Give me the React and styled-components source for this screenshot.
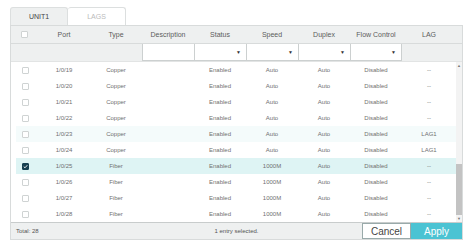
import React from "react";
import styled, { createGlobalStyle } from "styled-components";

const Global = createGlobalStyle`
  html, body { margin: 0; padding: 0; background: #fff; }
  body { font-family: "Liberation Sans", Arial, sans-serif; }
`;

const COLS = "27px 52px 52px 52px 52px 52px 52px 52px 54px";

const Wrap = styled.div`
  padding: 7px 0 0 10px;
  width: 453px;
`;

const Tabs = styled.div`
  display: flex;
  height: 18px;
`;

const Tab = styled.div`
  width: 58px;
  box-sizing: border-box;
  display: flex;
  align-items: center;
  justify-content: center;
  font-size: 7px;
  color: ${(p) => (p.$active ? "#444" : "#bbb")};
  background: ${(p) => (p.$active ? "#eef0f0" : "#fff")};
  border: 1px solid #dcdfdf;
  border-bottom: none;
  border-left: ${(p) => (p.$first ? "1px solid #dcdfdf" : "none")};
  border-radius: 3px 3px 0 0;
`;

const Panel = styled.div`
  border: 1px solid #d8dbdb;
  box-sizing: border-box;
  width: 453px;
  background: #fff;
`;

const Row = styled.div`
  display: grid;
  grid-template-columns: ${COLS} 8px;
  align-items: stretch;
`;

const HeadRow = styled(Row)`
  height: 17px;
  background: #eef0f0;
  border-bottom: 1px solid #d8dbdb;
`;

const HeadCell = styled.div`
  display: flex;
  align-items: center;
  justify-content: ${(p) => (p.$start ? "flex-start" : "center")};
  padding-left: ${(p) => (p.$start ? "10px" : "0")};
  font-size: 7px;
  color: #5c5c5c;
`;

const FilterRow = styled(Row)`
  height: 17px;
  background: #eef0f0;
  border-bottom: 1px solid #e2e4e4;
`;

const FilterCell = styled.div`
  display: flex;
  align-items: stretch;
`;

const Select = styled.div`
  flex: 1;
  background: #fff;
  border: 1px solid #ccd0d0;
  border-top: none;
  border-right: ${(p) => (p.$last ? "1px solid #ccd0d0" : "none")};
  display: flex;
  align-items: center;
  justify-content: flex-end;
  padding-right: 5px;
  font-size: 5px;
  color: #333;
`;

const Body = styled.div`
  display: flex;
  height: 160px;
`;

const Rows = styled.div`
  width: 445px;
`;

const DataRow = styled.div`
  display: grid;
  grid-template-columns: 22px 52px 52px 52px 52px 52px 52px 52px 54px;
  height: 16px;
  margin-left: 5px;
  background: ${(p) => (p.$sel ? "#def4f4" : p.$hover ? "#f4fbfb" : "#fff")};
`;

const Cell = styled.div`
  display: flex;
  align-items: center;
  justify-content: ${(p) => (p.$start ? "flex-start" : "center")};
  padding-left: ${(p) => (p.$start ? "6px" : "0")};
  font-size: 6px;
  color: #707070;
`;

const Check = styled.span`
  width: 7px;
  height: 7px;
  box-sizing: border-box;
  border: 1px solid ${(p) => (p.$on ? "#163f50" : "#cfd3d3")};
  background: ${(p) => (p.$on ? "#163f50" : "#fff")};
  border-radius: 1px;
  display: inline-flex;
  align-items: center;
  justify-content: center;
`;

const Scroll = styled.div`
  width: 8px;
  background: #f3f3f3;
  display: flex;
  flex-direction: column;
  align-items: center;
`;

const Arrow = styled.div`
  height: 7px;
  display: flex;
  align-items: center;
  justify-content: center;
  font-size: 4px;
  color: #777;
`;

const Gap = styled.div`
  height: ${(p) => p.$h}px;
`;

const Thumb = styled.div`
  width: 6px;
  height: 51px;
  background: #c3c3c3;
`;

const Footer = styled.div`
  display: grid;
  grid-template-columns: 1fr auto 1fr;
  height: 16px;
  background: #eef0f0;
  border-top: 1px solid #c8cccc;
  align-items: stretch;
`;

const Total = styled.div`
  display: flex;
  align-items: center;
  padding-left: 5px;
  font-size: 6px;
  color: #555;
`;

const Info = styled.div`
  display: flex;
  align-items: center;
  font-size: 6px;
  color: #555;
`;

const Buttons = styled.div`
  display: flex;
  justify-content: flex-end;
`;

const Btn = styled.div`
  width: ${(p) => p.$w}px;
  box-sizing: border-box;
  display: flex;
  align-items: center;
  justify-content: center;
  font-size: 10px;
  color: ${(p) => (p.$primary ? "#fff" : "#444")};
  background: ${(p) => (p.$primary ? "#4bc3d3" : "#fff")};
  border: 1px solid ${(p) => (p.$primary ? "#4bc3d3" : "#9aa")};
`;

const rows = [
  ["1/0/19", "Copper", "Auto", "--"],
  ["1/0/20", "Copper", "Auto", "--"],
  ["1/0/21", "Copper", "Auto", "--"],
  ["1/0/22", "Copper", "Auto", "--"],
  ["1/0/23", "Copper", "Auto", "LAG1"],
  ["1/0/24", "Copper", "Auto", "LAG1"],
  ["1/0/25", "Fiber", "1000M", "--"],
  ["1/0/26", "Fiber", "1000M", "--"],
  ["1/0/27", "Fiber", "1000M", "--"],
  ["1/0/28", "Fiber", "1000M", "--"],
];

const CheckMark = () => (
  <svg width="5" height="5" viewBox="0 0 10 10">
    <path d="M1.5 5.2 L4 7.6 L8.6 2.4" fill="none" stroke="#fff" strokeWidth="1.8" />
  </svg>
);

export default function App() {
  return (
    <Wrap>
      <Global />
      <Tabs>
        <Tab $active $first>UNIT1</Tab>
        <Tab>LAGS</Tab>
      </Tabs>
      <Panel>
        <HeadRow>
          <HeadCell $start><Check /></HeadCell>
          <HeadCell>Port</HeadCell>
          <HeadCell>Type</HeadCell>
          <HeadCell>Description</HeadCell>
          <HeadCell>Status</HeadCell>
          <HeadCell>Speed</HeadCell>
          <HeadCell>Duplex</HeadCell>
          <HeadCell>Flow Control</HeadCell>
          <HeadCell>LAG</HeadCell>
          <HeadCell />
        </HeadRow>
        <FilterRow>
          <FilterCell />
          <FilterCell />
          <FilterCell />
          <FilterCell><Select /></FilterCell>
          <FilterCell><Select>▼</Select></FilterCell>
          <FilterCell><Select>▼</Select></FilterCell>
          <FilterCell><Select>▼</Select></FilterCell>
          <FilterCell><Select $last>▼</Select></FilterCell>
          <FilterCell />
          <FilterCell />
        </FilterRow>
        <Body>
          <Rows>
            {rows.map((r, i) => (
              <DataRow key={r[0]} $sel={i === 6} $hover={i === 4}>
                <Cell $start><Check $on={i === 6}>{i === 6 && <CheckMark />}</Check></Cell>
                <Cell>{r[0]}</Cell>
                <Cell>{r[1]}</Cell>
                <Cell />
                <Cell>Enabled</Cell>
                <Cell>{r[2]}</Cell>
                <Cell>Auto</Cell>
                <Cell>Disabled</Cell>
                <Cell>{r[3]}</Cell>
              </DataRow>
            ))}
          </Rows>
          <Scroll>
            <Arrow>▲</Arrow>
            <Gap $h={95} />
            <Thumb />
            <Arrow>▼</Arrow>
          </Scroll>
        </Body>
        <Footer>
          <Total>Total: 28</Total>
          <Info>1 entry selected.</Info>
          <Buttons>
            <Btn $w={49}>Cancel</Btn>
            <Btn $w={51} $primary>Apply</Btn>
          </Buttons>
        </Footer>
      </Panel>
    </Wrap>
  );
}
